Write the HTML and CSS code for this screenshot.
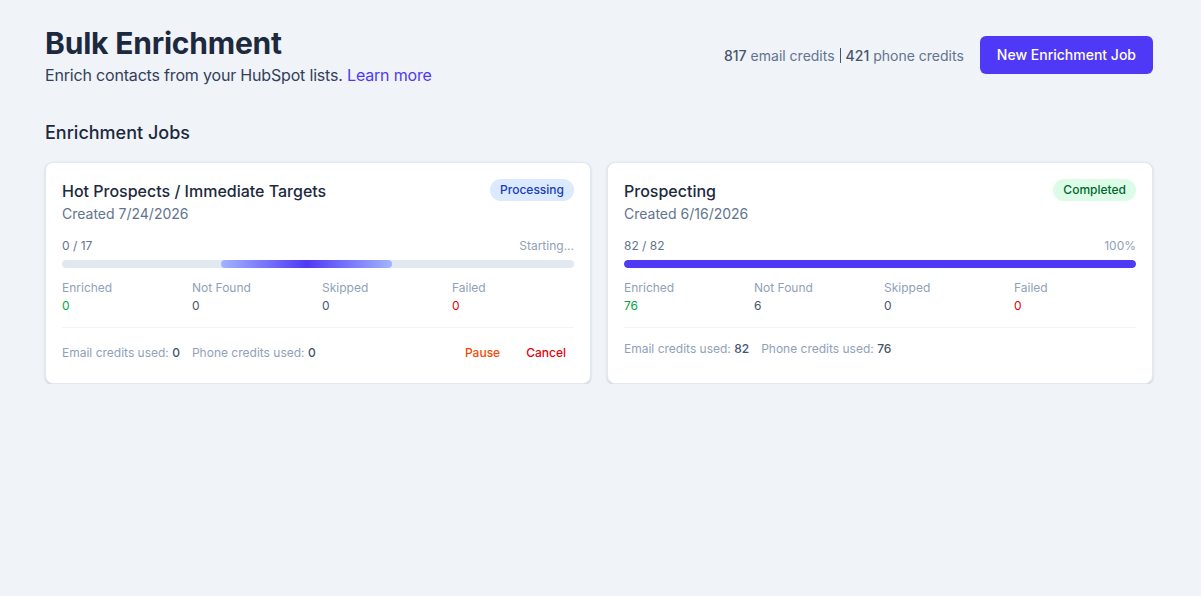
FILE: index.html
```html
<!DOCTYPE html>
<html lang="en">

<head>
  <meta charset="UTF-8">
  <meta name="viewport" content="width=device-width, initial-scale=1.0">
  <title>Bulk Enrichment</title>

  <link rel="stylesheet" href="styles.css">
</head>

<body>
  <div class="page">
    <div class="page-header">
      <div>
        <h1 class="page-title">Bulk Enrichment</h1>
        <p class="page-desc">Enrich contacts from your HubSpot lists. <a href="#" class="link">Learn more</a></p>
      </div>
      <div class="header-actions">
        <div class="credits">
          <b>817</b> email credits <span class="sep"></span> <b>421</b> phone credits
        </div>
        <button class="btn-primary">New Enrichment Job</button>
      </div>
    </div>

    <h2 class="section-title">Enrichment Jobs</h2>

    <div class="jobs">
      <!-- 处理中的任务 -->
      <div class="job-card">
        <div class="job-head">
          <div>
            <div class="job-name">Hot Prospects / Immediate Targets</div>
            <div class="job-date">Created 7/24/2026</div>
          </div>
          <span class="badge badge-processing">Processing</span>
        </div>

        <div class="progress-meta">
          <span>0 / 17</span>
          <span>Starting...</span>
        </div>
        <div class="track">
          <div class="bar-indeterminate"></div>
        </div>

        <div class="stats">
          <div>
            <div class="stat-label">Enriched</div>
            <div class="stat-value green">0</div>
          </div>
          <div>
            <div class="stat-label">Not Found</div>
            <div class="stat-value">0</div>
          </div>
          <div>
            <div class="stat-label">Skipped</div>
            <div class="stat-value">0</div>
          </div>
          <div>
            <div class="stat-label">Failed</div>
            <div class="stat-value red">0</div>
          </div>
        </div>

        <div class="job-foot">
          <div class="used">
            <span>Email credits used: <b>0</b></span>
            <span>Phone credits used: <b>0</b></span>
          </div>
          <div class="job-actions">
            <button class="btn-text orange">Pause</button>
            <button class="btn-text red">Cancel</button>
          </div>
        </div>
      </div>

      <!-- 已完成的任务 -->
      <div class="job-card">
        <div class="job-head">
          <div>
            <div class="job-name">Prospecting</div>
            <div class="job-date">Created 6/16/2026</div>
          </div>
          <span class="badge badge-completed">Completed</span>
        </div>

        <div class="progress-meta">
          <span>82 / 82</span>
          <span>100%</span>
        </div>
        <div class="track">
          <div class="bar" style="width: 100%;"></div>
        </div>

        <div class="stats">
          <div>
            <div class="stat-label">Enriched</div>
            <div class="stat-value green">76</div>
          </div>
          <div>
            <div class="stat-label">Not Found</div>
            <div class="stat-value">6</div>
          </div>
          <div>
            <div class="stat-label">Skipped</div>
            <div class="stat-value">0</div>
          </div>
          <div>
            <div class="stat-label">Failed</div>
            <div class="stat-value red">0</div>
          </div>
        </div>

        <div class="job-foot">
          <div class="used">
            <span>Email credits used: <b>82</b></span>
            <span>Phone credits used: <b>76</b></span>
          </div>
        </div>
      </div>
    </div>
  </div>
</body>

</html>
```

FILE: styles.css
```css
/* 页面基础 */
body {
  margin: 0;
  background: #f0f3f8;
  font-family: Inter, "Noto Sans", sans-serif;
  color: #1d293d;
}

.page {
  padding: 25px 48px 0 45px;
}

/* 顶部标题栏 */
.page-header {
  display: flex;
  justify-content: space-between;
  align-items: flex-start;
}

.page-title {
  margin: 0;
  font-size: 30px;
  line-height: 36px;
  font-weight: 700;
  color: #1d293d;
  letter-spacing: -0.2px;
}

.page-desc {
  margin: 2px 0 0;
  font-size: 16px;
  line-height: 24px;
  color: #314158;
  letter-spacing: -0.18px;
}

.link {
  color: #4f39f6;
  text-decoration: none;
}

.header-actions {
  display: flex;
  align-items: center;
  gap: 16px;
  margin-top: 11px;
}

.credits {
  font-size: 14px;
  line-height: 20px;
  color: #62748e;
  display: flex;
  align-items: center;
  gap: 4px;
  padding-top: 1px;
}

.credits b {
  font-weight: 500;
  color: #45556c;
}

.sep {
  display: inline-block;
  width: 1px;
  height: 15px;
  background: #45556c;
  margin: 0 1px;
}

.btn-primary {
  border: none;
  background: #4f39f6;
  color: #fff;
  font-family: inherit;
  font-size: 14px;
  font-weight: 500;
  line-height: 20px;
  padding: 9px 17px;
  border-radius: 6px;
}

/* 任务列表 */
.section-title {
  margin: 32px 0 15px;
  font-size: 18px;
  line-height: 28px;
  font-weight: 500;
  color: #1d293d;
}

.jobs {
  display: grid;
  grid-template-columns: 1fr 1fr;
  gap: 16px;
}

.job-card {
  background: #fff;
  border: 1px solid #e2e8f0;
  border-radius: 8px;
  box-shadow: 0 1px 3px rgba(0, 0, 0, 0.1), 0 1px 2px rgba(0, 0, 0, 0.06);
  padding: 16px 16px 18px;
}

.job-head {
  display: flex;
  justify-content: space-between;
  align-items: flex-start;
}

.job-name {
  font-size: 16px;
  line-height: 24px;
  font-weight: 500;
  color: #1d293d;
}

.job-date {
  margin-top: 1px;
  font-size: 14px;
  line-height: 20px;
  color: #62748e;
}

.badge {
  font-size: 12px;
  line-height: 16px;
  font-weight: 500;
  padding: 3px 10px;
  border-radius: 999px;
}

.badge-processing {
  background: #dbeafe;
  color: #193cb8;
}

.badge-completed {
  background: #dcfce7;
  color: #016630;
}

/* 进度条 */
.progress-meta {
  display: flex;
  justify-content: space-between;
  margin-top: 14px;
  font-size: 12px;
  line-height: 16px;
  color: #62748e;
}

.progress-meta span:last-child {
  color: #90a1b9;
}

.track {
  margin-top: 6px;
  height: 8px;
  border-radius: 999px;
  background: #e2e8f0;
  overflow: hidden;
}

.bar {
  height: 100%;
  background: #4f39f6;
  border-radius: 999px;
}

.bar-indeterminate {
  height: 100%;
  width: 33.4%;
  margin-left: 31%;
  border-radius: 999px;
  background: linear-gradient(90deg, #a3b3ff, #4f39f6 50%, #a3b3ff);
}

/* 统计 */
.stats {
  display: grid;
  grid-template-columns: repeat(4, 1fr);
  gap: 8px;
  margin-top: 12px;
  padding-bottom: 13px;
  border-bottom: 1px solid #f1f5f9;
}

.stat-label {
  font-size: 12px;
  line-height: 16px;
  color: #90a1b9;
}

.stat-value {
  margin-top: 2px;
  font-size: 12px;
  line-height: 16px;
  color: #45556c;
}

.green {
  color: #00a63e;
}

.red {
  color: #e7000b;
}

.orange {
  color: #f54900;
}

.job-foot {
  display: flex;
  justify-content: space-between;
  align-items: center;
  padding-top: 13px;
  font-size: 12px;
  line-height: 16px;
  color: #90a1b9;
}

.used {
  display: flex;
  gap: 12px;
}

.used b {
  font-weight: 500;
  color: #45556c;
}

.job-actions {
  display: flex;
  gap: 10px;
}

.btn-text {
  border: none;
  background: none;
  font-family: inherit;
  font-size: 12px;
  line-height: 16px;
  font-weight: 500;
  padding: 4px 8px;
  border-radius: 4px;
}
```
